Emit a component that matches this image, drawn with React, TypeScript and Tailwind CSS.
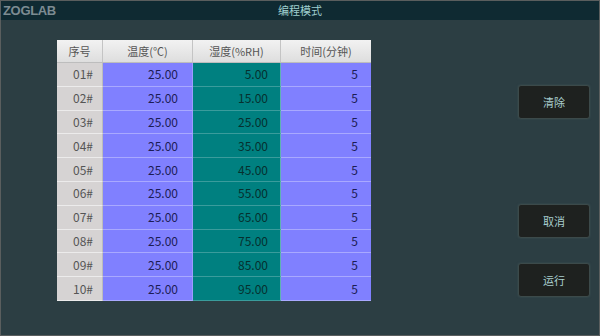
const rows = [
  { id: "01#", t: "25.00", h: "5.00", m: "5" },
  { id: "02#", t: "25.00", h: "15.00", m: "5" },
  { id: "03#", t: "25.00", h: "25.00", m: "5" },
  { id: "04#", t: "25.00", h: "35.00", m: "5" },
  { id: "05#", t: "25.00", h: "45.00", m: "5" },
  { id: "06#", t: "25.00", h: "55.00", m: "5" },
  { id: "07#", t: "25.00", h: "65.00", m: "5" },
  { id: "08#", t: "25.00", h: "75.00", m: "5" },
  { id: "09#", t: "25.00", h: "85.00", m: "5" },
  { id: "10#", t: "25.00", h: "95.00", m: "5" },
];

const font = { fontFamily: '"Noto Sans CJK SC", "Noto Sans", sans-serif' };

function HmiButton({ label }: { label: string }) {
  return (
    <button className="w-[72px] h-[34px] rounded-[3px] bg-[#1e211f] border border-[#3c4a4a] text-[11px] text-[#a9cfcf] flex items-center justify-center shadow-[0_0_2px_#3f5356]">
      {label}
    </button>
  );
}

export default function App() {
  return (
    <div className="w-[600px] h-[336px] flex flex-col bg-[#2c3e43] border border-[#5a5e5e] overflow-hidden" style={font}>
      {/* title bar */}
      <div className="h-[19px] shrink-0 bg-[#0f2a32] flex items-center relative">
        <span className="pl-[2px] text-[13px] font-bold text-[#7d8c92] tracking-tight" style={{ fontFamily: '"Liberation Sans", sans-serif' }}>
          ZOGLAB
        </span>
        <span className="absolute left-0 right-0 text-center text-[11px] text-[#9fcfcf]">编程模式</span>
      </div>

      <div className="flex flex-1">
        {/* table */}
        <div className="ml-[56px] mt-[20px] w-[314px] self-start bg-[#e4e2e2]">
          <div className="flex h-[23px] text-[11px] text-[#555] bg-gradient-to-b from-[#f2f2f2] to-[#dedede] border-b border-[#bdbdbd]">
            <div className="w-[46px] flex items-center justify-center border-r border-[#c4c4c4]">序号</div>
            <div className="w-[90px] flex items-center justify-center border-r border-[#c4c4c4]">温度(℃)</div>
            <div className="w-[88px] flex items-center justify-center border-r border-[#c4c4c4]">湿度(%RH)</div>
            <div className="w-[90px] flex items-center justify-center">时间(分钟)</div>
          </div>
          {rows.map((r) => (
            <div key={r.id} className="flex h-[23.8px] text-[12px]">
              <div className="w-[46px] flex items-center justify-end pr-[9px] bg-[#d6d3d3] text-[#555] border-b border-[#ecebeb] border-r border-r-[#bcbcbc]">
                {r.id}
              </div>
              <div className="w-[90px] flex items-center justify-end pr-[14px] bg-[#8080ff] text-[#1c1c55] border-b border-[#a9a9ff] border-r border-r-[#9c9cff]">
                {r.t}
              </div>
              <div className="w-[88px] flex items-center justify-end pr-[12px] bg-[#008080] text-[#06302f] border-b border-[#3a9c9c] border-r border-r-[#5fb2b2]">
                {r.h}
              </div>
              <div className="w-[90px] flex items-center justify-end pr-[13px] bg-[#8080ff] text-[#1c1c55] border-b border-[#a9a9ff]">
                {r.m}
              </div>
            </div>
          ))}
        </div>

        {/* buttons */}
        <div className="ml-[147px] mt-[65px] flex flex-col">
          <HmiButton label="清除" />
          <div className="h-[85px]" />
          <HmiButton label="取消" />
          <div className="h-[25px]" />
          <HmiButton label="运行" />
        </div>
      </div>
    </div>
  );
}
